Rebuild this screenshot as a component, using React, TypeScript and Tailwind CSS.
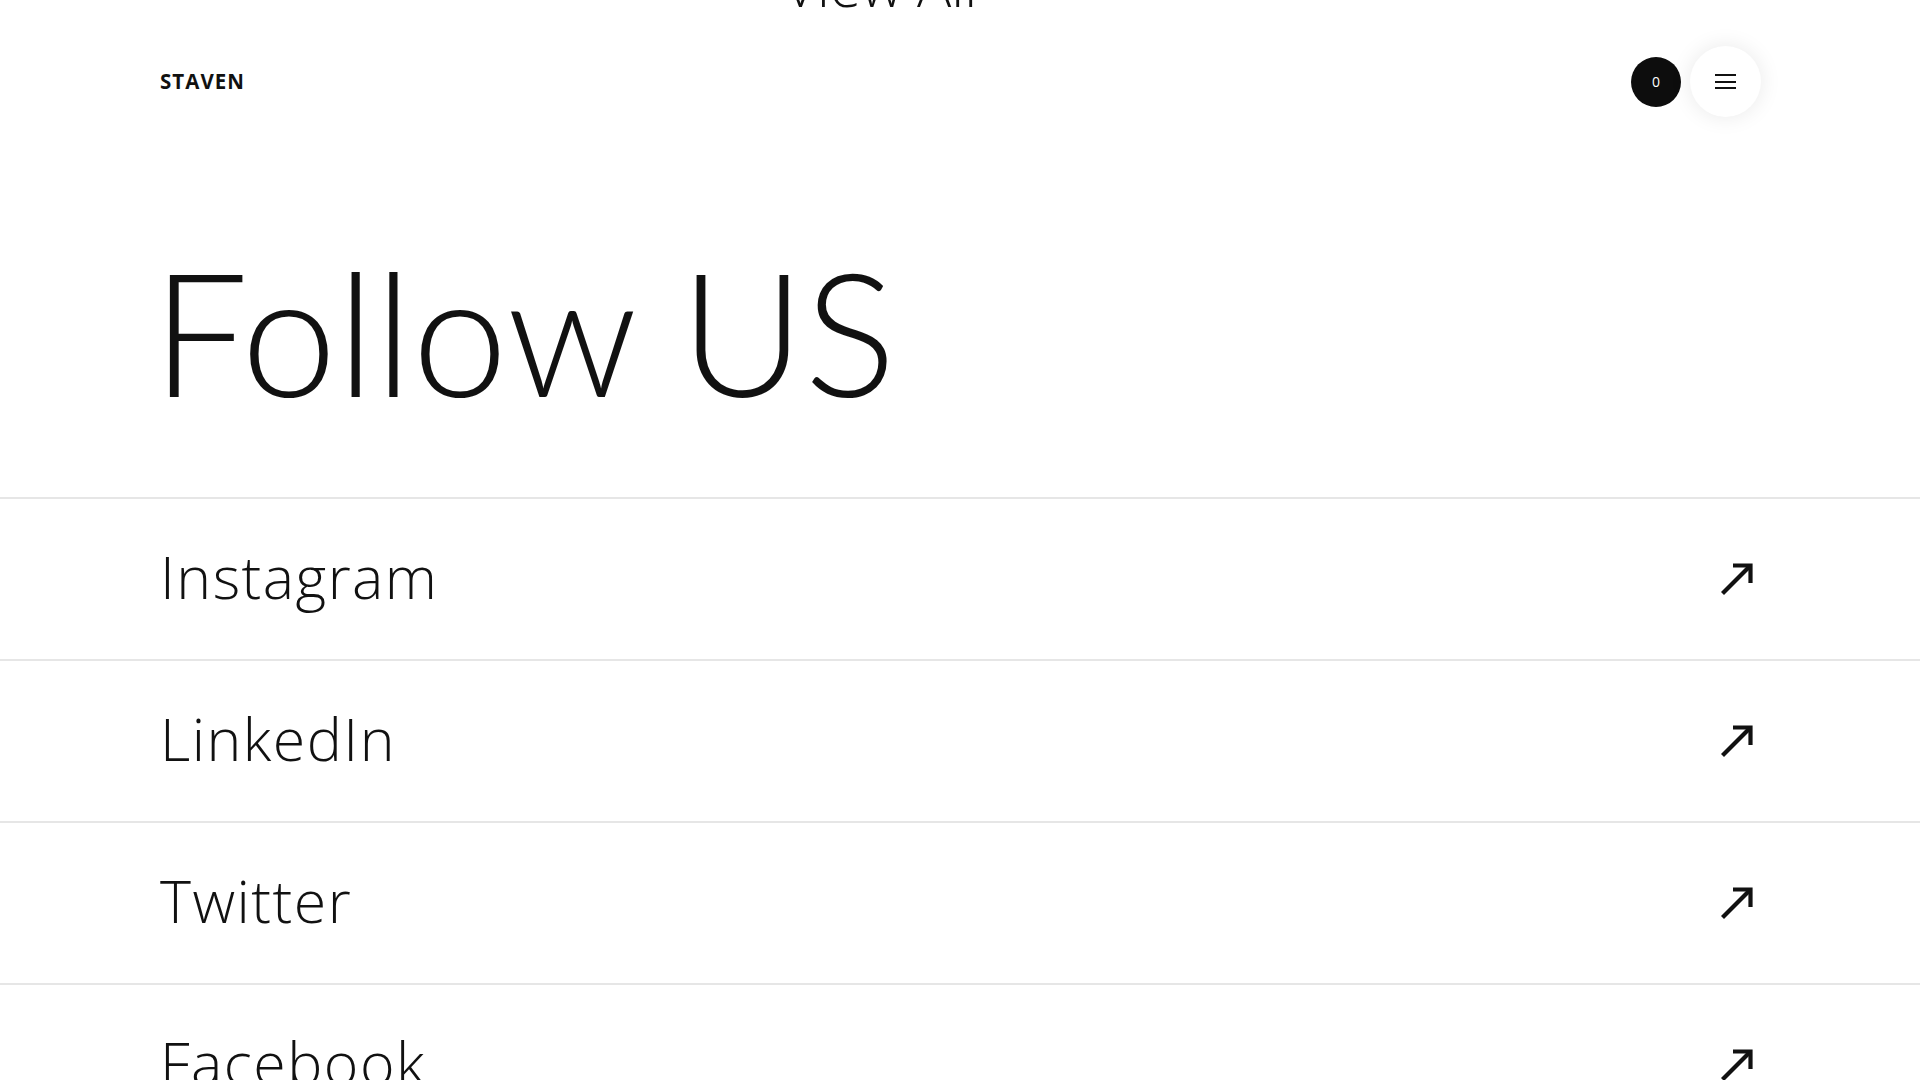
import React from "react";

const links = ["Instagram", "LinkedIn", "Twitter", "Facebook"];

function ArrowUpRight() {
    return (
        <svg viewBox="0 0 34 34" className="w-[34px] h-[34px]" fill="none" stroke="#111" strokeWidth={4.2} strokeLinecap="butt">
            <line x1="2.5" y1="31.5" x2="30.5" y2="3.5" />
            <polyline points="13,3.5 30.5,3.5 30.5,21" strokeLinejoin="miter" />
        </svg>
    );
}

export default function App() {
    return (
        <div className="min-h-screen bg-white text-[#111] overflow-hidden font-['Open_Sans',sans-serif]">
            {/* tail of previous section */}
            <div className="h-[14px] overflow-hidden flex items-end pl-[784px]">
                <span className="text-[57px] leading-none font-light">View All</span>
            </div>

            {/* header */}
            <header className="h-[135px] pl-[160px] pr-[159px] flex items-center justify-between">
                <div className="text-[20.5px] font-bold tracking-[0.05em] leading-none">STAVEN</div>
                <div className="flex items-center gap-[9px]">
                    <div className="w-[50px] h-[50px] rounded-full bg-[#0d0d0d] text-white text-[14px] flex items-center justify-center">
                        0
                    </div>
                    <button className="w-[71px] h-[71px] rounded-full bg-white shadow-[0_0_22px_rgba(0,0,0,0.09)] flex flex-col items-center justify-center gap-[4.5px]">
                        <span className="block w-[21px] h-[2px] bg-[#111]" />
                        <span className="block w-[21px] h-[2px] bg-[#111]" />
                        <span className="block w-[21px] h-[2px] bg-[#111]" />
                    </button>
                </div>
            </header>

            {/* title */}
            <h1 className="mt-[96px] mb-[81px] pl-[152px] text-[171px] leading-none font-light font-['Lato',sans-serif]">
                Follow US
            </h1>

            {/* social list */}
            <ul>
                {links.map((name) => (
                    <li
                        key={name}
                        className="h-[162px] border-t-2 border-[#e6e6e6] pl-[160px] pr-[166px] pb-[6px] flex items-center justify-between"
                    >
                        <span className="text-[59px] leading-none font-light tracking-[0.025em]">{name}</span>
                        <span className="pt-[6px]">
                            <ArrowUpRight />
                        </span>
                    </li>
                ))}
            </ul>
        </div>
    );
}
